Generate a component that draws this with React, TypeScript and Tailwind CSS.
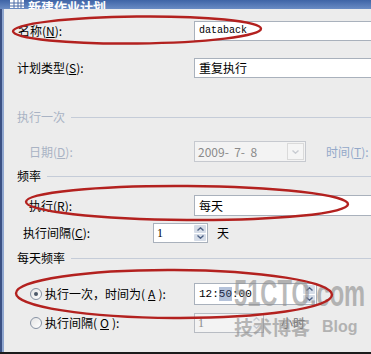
import React from "react";

function Chevron({ dir, color = "#4d6185" }: { dir: "up" | "down"; color?: string }) {
  return (
    <svg width="7" height="4" viewBox="0 0 7 4">
      <polyline
        points={dir === "up" ? "0.5,3.5 3.5,0.8 6.5,3.5" : "0.5,0.5 3.5,3.2 6.5,0.5"}
        fill="none"
        stroke={color}
        strokeWidth="1.4"
      />
    </svg>
  );
}

function Spin({ disabled }: { disabled?: boolean }) {
  const c = disabled ? "#c4c9d2" : "#4d6185";
  return (
    <div className={`flex w-[14px] flex-col gap-px p-px ${disabled ? "bg-[#f1f1f1]" : "bg-white"}`}>
      <div className={`flex flex-1 items-center justify-center rounded-[1px] ${disabled ? "bg-[#eeeeee]" : "bg-[#d6dde8]"}`}>
        <Chevron dir="up" color={c} />
      </div>
      <div className={`flex flex-1 items-center justify-center rounded-[1px] ${disabled ? "bg-[#eeeeee]" : "bg-[#d6dde8]"}`}>
        <Chevron dir="down" color={c} />
      </div>
    </div>
  );
}

function Key({ k }: { k: string }) {
  return (
    <>
      (<span className="underline underline-offset-1">{k}</span>):
    </>
  );
}

function Group({ label, lineFrom }: { label: string; lineFrom?: string }) {
  return (
    <div className="flex h-[14px] items-center gap-[6px]">
      <span className={lineFrom ?? "text-black"}>{label}</span>
      <div className="h-px flex-1 bg-[#c5ccd8]" />
    </div>
  );
}

function Radio({ checked }: { checked?: boolean }) {
  return (
    <span className="flex h-[12px] w-[12px] items-center justify-center rounded-full border border-[#8792a3] bg-gradient-to-br from-[#e4e4e4] to-white">
      {checked ? <span className="h-[4px] w-[4px] rounded-full bg-[#4c5868]" /> : null}
    </span>
  );
}

export default function App() {
  return (
    <div className="relative h-[354px] w-[371px] overflow-hidden bg-[#ececec] font-['Noto_Sans_CJK_SC',sans-serif] text-[12px] leading-[14px] text-black">
      {/* title bar, mostly scrolled off */}
      <div className="flex h-[9px] items-end gap-[4px] overflow-hidden bg-gradient-to-b from-[#3f64a6] to-[#6a8cc4] pl-[10px]">
        <svg width="14" height="8" viewBox="0 0 14 8" className="mb-[1px]">
          <rect x="0" y="0" width="14" height="8" fill="#ffffff" />
          <path d="M0 3h14M0 6h14M4 0v8M8 0v8M11 0v8" stroke="#4a6aa6" strokeWidth="1" />
        </svg>
        <span className="-mb-[6px] text-[13px] font-bold leading-[16px] text-white">新建作业计划</span>
      </div>

      <div className="flex h-[343px]">
        <div className="flex w-[4px]">
          <div className="w-[2px] bg-[#3b5184]" />
          <div className="w-[2px] bg-[#8fa6cf]" />
        </div>
        <div className="flex flex-1 flex-col pl-[13px]">
          <div className="mt-[12px] flex h-[20px] items-center">
            <span className="w-[177px] pl-px">名称<Key k="N" /></span>
            <div className="flex h-full flex-1 items-center border border-r-0 border-[#a9b1bc] bg-white pl-[4px] font-['Liberation_Mono',monospace] text-[10px]">
              databack
            </div>
          </div>

          <div className="mt-[17px] flex h-[20px] items-center">
            <span className="w-[177px]">计划类型<Key k="S" /></span>
            <div className="flex h-full flex-1 items-center border border-r-0 border-[#a9b1bc] bg-white pl-[4px]">
              重复执行
            </div>
          </div>

          <div className="mt-[32px]">
            <Group label="执行一次" lineFrom="text-[#a9b3c4]" />
          </div>

          <div className="mt-[17px] flex h-[21px] items-center text-[#a9b3c4]">
            <span className="w-[177px] pl-[12px]">日期<Key k="D" /></span>
            <div className="flex h-full w-[112px] border border-[#c6c9cf] bg-[#f3f3f3]">
              <span className="flex flex-1 items-center pl-[3px] text-[#8a8a8a]">2009-&nbsp;&nbsp;7-&nbsp;&nbsp;8</span>
              <div className="m-px flex w-[17px] items-center justify-center border border-[#dadada] bg-[#f5f5f5]">
                <Chevron dir="down" color="#c9ccd2" />
              </div>
            </div>
            <span className="ml-[20px] whitespace-nowrap text-[#93a8c9]">时间<Key k="T" /></span>
          </div>

          <div className="mt-[7px]">
            <Group label="频率" />
          </div>

          <div className="mt-[12px] flex h-[21px] items-center">
            <span className="w-[177px] pl-[12px]">执行<Key k="R" /></span>
            <div className="flex h-full flex-1 items-center border border-r-0 border-[#a9b1bc] bg-white pl-[4px]">
              每天
            </div>
          </div>

          <div className="mt-[7px] flex h-[20px] items-center">
            <span className="w-[136px] pl-[6px]">执行间隔<Key k="C" /></span>
            <div className="flex h-full w-[55px] border border-[#a9b1bc] bg-white">
              <span className="flex flex-1 items-center pl-[3px] font-['Liberation_Serif',serif]">1</span>
              <Spin />
            </div>
            <span className="ml-[9px]">天</span>
          </div>

          <div className="mt-[8px]">
            <Group label="每天频率" />
          </div>

          <div className="mt-[18px] flex h-[22px] items-center">
            <span className="flex w-[177px] items-center gap-[3px] pl-[13px]">
              <Radio checked />
              执行一次，时间为<Key k="A" />
            </span>
            <div className="flex h-full w-[123px] border border-[#a9b1bc] bg-white">
              <span className="flex flex-1 items-center pl-[4px] font-['Liberation_Mono',monospace] text-[11px]">
                12:<span className="bg-[#b4c2da] text-[#1e2a44]">50</span>:00
              </span>
              <Spin />
            </div>
          </div>

          <div className="mt-[8px] flex h-[20px] items-center">
            <span className="flex w-[177px] items-center gap-[3px] pl-[13px]">
              <Radio />
              执行间隔<Key k="O" />
            </span>
            <div className="flex h-full w-[70px] border border-[#b8bcc3] bg-[#f3f3f3]">
              <span className="flex flex-1 items-center pl-[3px] font-['Liberation_Serif',serif] text-[#8a8a8a]">1</span>
              <Spin disabled />
            </div>
            <span className="ml-[17px] text-[#6f6f6f]">小时</span>
          </div>
        </div>
      </div>
      <div className="h-[2px] bg-[#1c1c1c]" />

      {/* watermark */}
      <div className="pointer-events-none absolute left-[234px] top-[276px] flex w-[125px] flex-col text-[#8d8d8d] opacity-60">
        <span className="origin-left scale-x-[0.64] whitespace-nowrap font-['Liberation_Sans',sans-serif] text-[37px] font-bold leading-[36px]">
          51CTO.com
        </span>
        <div className="mt-[4px] flex items-end gap-[12px]">
          <span className="text-[19px] font-bold leading-[22px]">技术博客</span>
          <span className="mb-[2px] font-['Liberation_Sans',sans-serif] text-[16px] font-bold leading-[18px]">Blog</span>
        </div>
      </div>

      {/* red hand-drawn ellipses */}
      <svg className="pointer-events-none absolute inset-0" width="371" height="354" viewBox="0 0 371 354">
        <g fill="none" stroke="#b3211f" strokeWidth="2.4">
          <ellipse cx="137" cy="30" rx="124" ry="13.5" transform="rotate(-0.6 137 30)" />
          <ellipse cx="187" cy="203" rx="161" ry="17" transform="rotate(0.4 187 203)" />
          <ellipse cx="174" cy="294" rx="158" ry="24" transform="rotate(0.3 174 294)" />
        </g>
      </svg>
    </div>
  );
}
